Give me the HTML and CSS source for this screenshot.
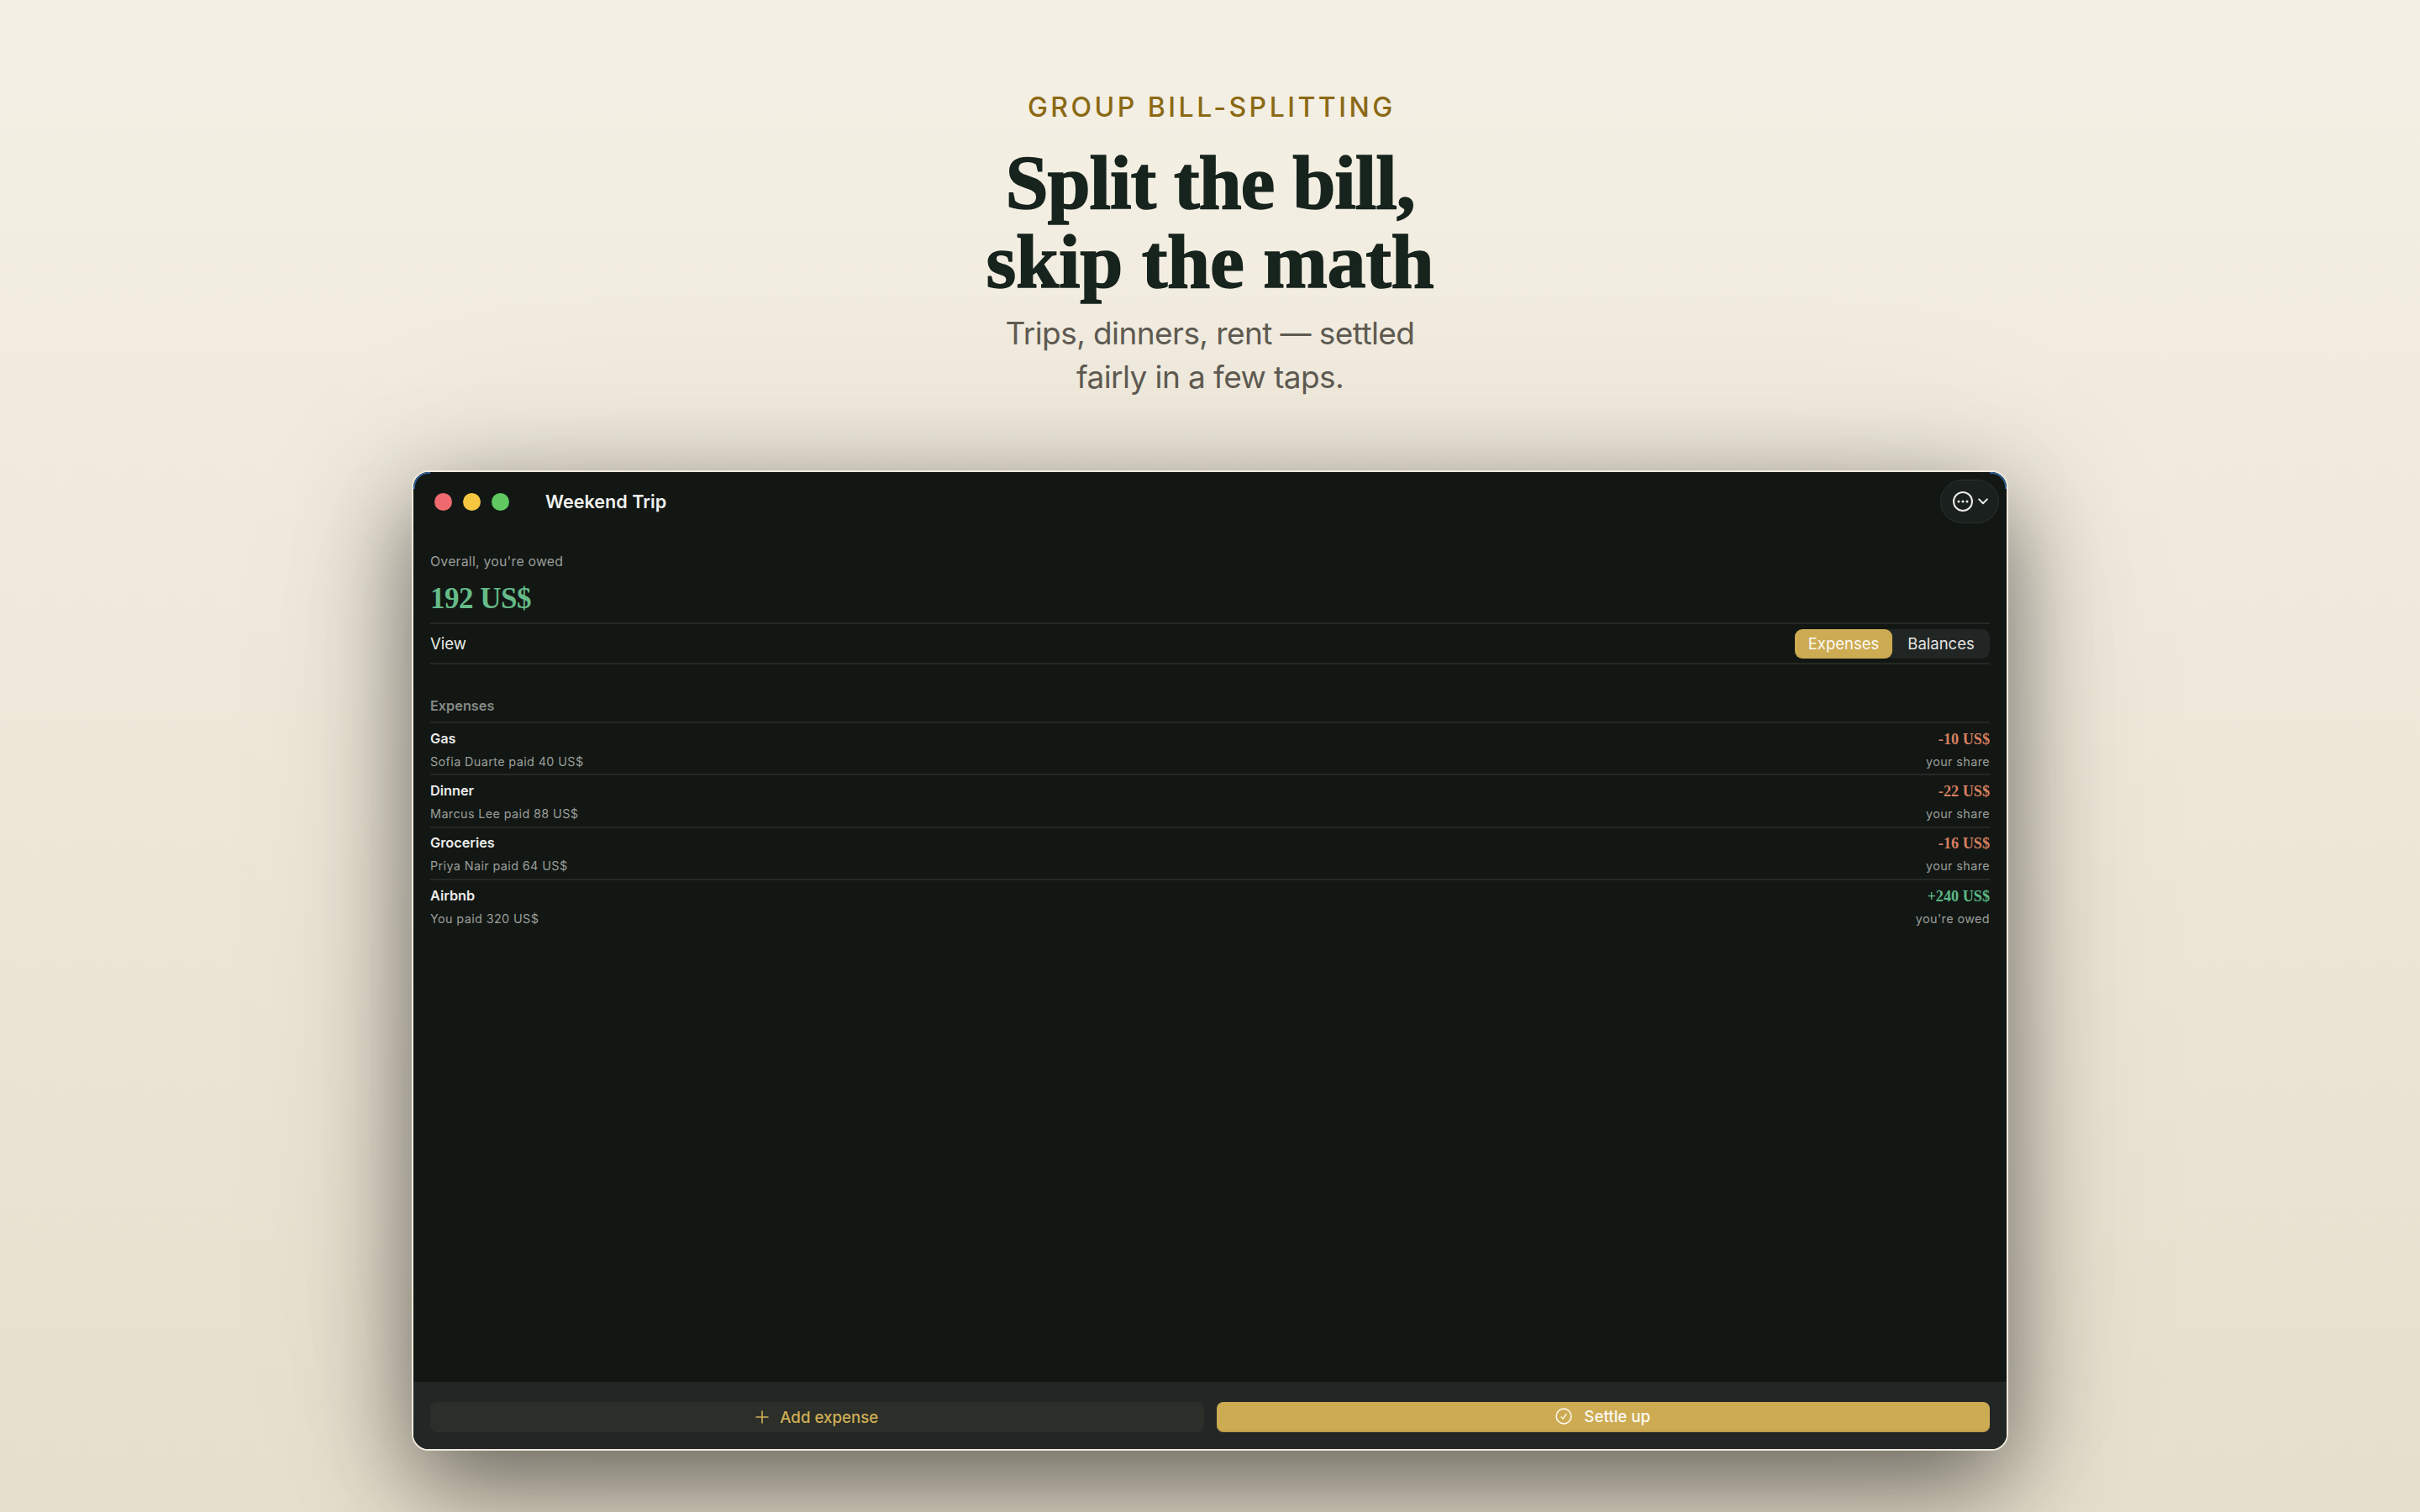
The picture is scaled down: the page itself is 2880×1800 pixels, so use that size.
FILE: index.html
```html
<!DOCTYPE html>
<html lang="en">
<head>
<meta charset="utf-8">
<title>Split the bill</title>
<link rel="stylesheet" href="styles.css">
</head>
<body>
<main class="page">
  <header class="hero">
    <p class="eyebrow">GROUP BILL-SPLITTING</p>
    <h1 class="headline"><span class="headline-one">Split the bill,</span><br><span class="headline-two">skip the math</span></h1>
    <p class="lede">Trips, dinners, rent — settled<br>fairly in a few taps.</p>
  </header>
  <section class="window">
    <div class="titlebar">
      <span class="light light-red"></span>
      <span class="light light-yellow"></span>
      <span class="light light-green"></span>
      <span class="title">Weekend Trip</span>
      <button class="menu-pill" aria-label="More">
        <svg class="menu-icon" viewBox="0 0 24 24"><circle cx="12" cy="12" r="11" fill="none" stroke="currentColor" stroke-width="2"/><circle cx="7" cy="12" r="1.5" fill="currentColor"/><circle cx="12" cy="12" r="1.5" fill="currentColor"/><circle cx="17" cy="12" r="1.5" fill="currentColor"/></svg>
        <svg class="menu-chevron" viewBox="0 0 12 8"><path d="M1.2 1.4 6 6.2l4.8-4.8" fill="none" stroke="currentColor" stroke-width="2" stroke-linecap="round" stroke-linejoin="round"/></svg>
      </button>
    </div>
    <div class="content">
      <div class="summary">
        <p class="summary-label">Overall, you're owed</p>
        <p class="summary-value">192 US$</p>
      </div>
      <div class="view-row">
        <span class="view-label">View</span>
        <div class="segmented">
          <span class="segment segment-active">Expenses</span>
          <span class="segment">Balances</span>
        </div>
      </div>
      <h2 class="section-title">Expenses</h2>
      <ul class="expenses">
        <li class="expense">
          <div class="col"><span class="name">Gas</span><span class="meta">Sofia Duarte paid 40 US$</span></div>
          <div class="col col-right"><span class="amount neg">-10 US$</span><span class="meta">your share</span></div>
        </li>
        <li class="expense">
          <div class="col"><span class="name">Dinner</span><span class="meta">Marcus Lee paid 88 US$</span></div>
          <div class="col col-right"><span class="amount neg">-22 US$</span><span class="meta">your share</span></div>
        </li>
        <li class="expense">
          <div class="col"><span class="name">Groceries</span><span class="meta">Priya Nair paid 64 US$</span></div>
          <div class="col col-right"><span class="amount neg">-16 US$</span><span class="meta">your share</span></div>
        </li>
        <li class="expense">
          <div class="col"><span class="name">Airbnb</span><span class="meta">You paid 320 US$</span></div>
          <div class="col col-right"><span class="amount pos">+240 US$</span><span class="meta">you're owed</span></div>
        </li>
      </ul>
    </div>
    <footer class="actions">
      <button class="action action-add">
        <svg class="action-plus" viewBox="0 0 16 16"><path d="M8 0.5v15M0.5 8h15" fill="none" stroke="currentColor" stroke-width="1.6"/></svg>
        Add expense
      </button>
      <button class="action action-settle">
        <svg class="action-check" viewBox="0 0 20 20"><circle cx="10" cy="10" r="8.9" fill="none" stroke="currentColor" stroke-width="1.6"/><path d="M6.6 10.4 9 13l4.4-6" fill="none" stroke="currentColor" stroke-width="1.3"/></svg>
        Settle up
      </button>
    </footer>
  </section>
</main>
</body>
</html>
```
FILE: styles.css
```css
* { box-sizing: border-box; }
html, body { margin: 0; height: 100%; }
body {
  width: 2880px;
  height: 1800px;
  overflow: hidden;
  font-family: "Inter", "Liberation Sans", sans-serif;
  background: linear-gradient(180deg, #f5f0e5 0%, #e6dfcd 100%);
}
p, h1, h2, ul { margin: 0; padding: 0; }
.page { display: flex; flex-direction: column; align-items: center; height: 100%; }

.hero { display: flex; flex-direction: column; align-items: center; text-align: center; padding-top: 109px; }
.eyebrow { padding-left: 3.5px; font-size: 32px; line-height: 38px; font-weight: 500; letter-spacing: 3.5px; color: #8b6914; }
.headline {
  margin-top: 23px;
  font-family: "Liberation Serif", serif;
  font-weight: 700;
  font-size: 92px;
  line-height: 94px;
  color: #17231d;
  -webkit-text-stroke: 1.5px #17231d;
}
.headline-one { letter-spacing: -1.1px; }
.headline-two { letter-spacing: -0.3px; }
.lede { margin-top: 12.5px; font-size: 37px; line-height: 52px; letter-spacing: -0.58px; color: #5f5b52; }

.window {
  position: relative;
  display: flex;
  flex-direction: column;
  width: 1900px;
  height: 1167px;
  margin-top: 85.5px;
  background: #121714;
  border: 2px solid #efe9dc;
  border-radius: 20px;
  box-shadow: 0 40px 120px rgba(0, 0, 0, 0.55), 0 0 320px rgba(60, 50, 20, 0.08);
  overflow: hidden;
}
.window::before, .window::after {
  content: "";
  position: absolute;
  top: 0;
  width: 18px;
  height: 18px;
  border-top: 2px solid #2c5d96;
}
.window::before { left: 0; border-left: 2px solid #2c5d96; border-top-left-radius: 18px; }
.window::after { right: 0; border-right: 2px solid #2c5d96; border-top-right-radius: 18px; }

.titlebar { position: relative; display: flex; align-items: center; height: 70px; flex: none; padding-left: 25px; }
.light { width: 21px; height: 21px; border-radius: 50%; margin-right: 13px; }
.light-red { background: #ef6a6e; }
.light-yellow { background: #f5c63f; }
.light-green { background: #5fc860; }
.title { margin-left: 30px; font-size: 21.6px; font-weight: 600; color: #f0f0ee; }
.menu-pill {
  position: absolute;
  right: 9px;
  top: 9px;
  display: flex;
  align-items: center;
  gap: 6px;
  width: 70px;
  height: 52px;
  padding: 0 0 0 14px;
  color: #ecece8;
  background: #1a201d;
  border: 1.5px solid #2b332e;
  border-radius: 26px;
}
.menu-icon { flex: none; width: 24px; height: 24px; }
.menu-chevron { flex: none; width: 12px; height: 8px; }

.content { flex: 1; display: flex; flex-direction: column; padding: 0 20px; }
.summary { flex: none; height: 109px; padding-top: 26px; }
.summary-label { font-size: 15.84px; line-height: 22px; letter-spacing: 0.22px; color: #9a9d99; }
.summary-value { margin-top: 11.5px; font-family: "Liberation Serif", serif; font-weight: 700; font-size: 35px; line-height: 42px; letter-spacing: -0.5px; color: #66bb88; }

.view-row {
  flex: none;
  display: flex; align-items: center; justify-content: space-between;
  height: 50px;
  border-top: 2px solid #242926;
  border-bottom: 2px solid #242926;
}
.view-label { font-size: 18.5px; color: #ecece8; }
.segmented { display: flex; width: 232px; height: 35px; background: #212624; border-radius: 9px; }
.segment { flex: 1; display: flex; align-items: center; justify-content: center; font-size: 18.5px; color: #e4e4e1; }
.segment-active { color: #fbf9f2; background: #cdab52; border-radius: 9px; }

.section-title { margin: 35px 0 5px; font-size: 16.3px; line-height: 28px; font-weight: 600; color: #868a86; }
.expenses { list-style: none; }
.expense {
  display: flex; justify-content: space-between;
  height: 62.4px;
  padding-top: 7.6px;
  border-top: 2px solid #242926;
}
.col { display: flex; flex-direction: column; gap: 7px; }
.col-right { align-items: flex-end; }
.name { font-size: 16.3px; line-height: 21px; font-weight: 600; color: #ececea; }
.meta { font-size: 14.4px; line-height: 20px; letter-spacing: 0.38px; color: #9a9d99; }
.amount { margin: 1px 0 -1px; font-family: "Liberation Serif", serif; font-weight: 700; font-size: 18.2px; line-height: 21px; }
.neg { color: #d67f5f; }
.pos { color: #5cb885; }

.actions { flex: none; display: flex; gap: 15px; height: 80px; padding: 24px 20px 20px; background: #222726; }
.action {
  flex: 1;
  display: flex; align-items: center; justify-content: center;
  height: 36px;
  border: 0;
  border-radius: 8px;
  font: 500 18.72px "Inter", "Liberation Sans", sans-serif;
}
.action-add { gap: 13px; color: #cfae55; background: #2c2e2a; }
.action-settle { gap: 14px; color: #fbf9f2; background: #cdab52; border-bottom: 2px solid #bf9f49; }
.action-plus { width: 16px; height: 16px; }
.action-check { width: 20px; height: 20px; }
```
